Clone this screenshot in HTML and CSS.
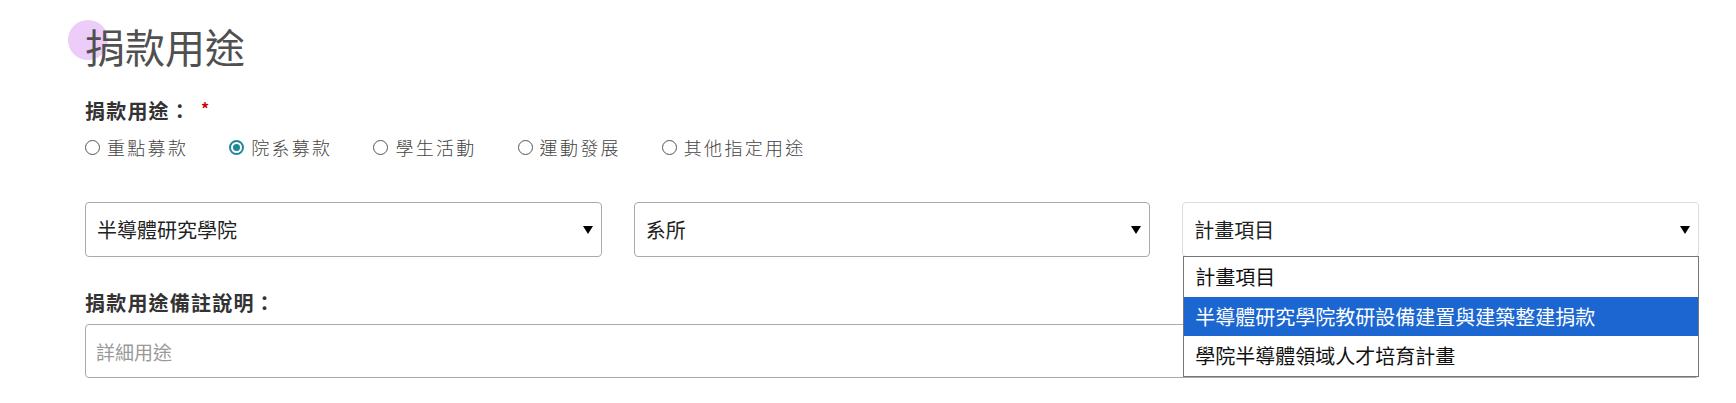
FILE: index.html
```html
<!DOCTYPE html>
<html lang="zh-Hant">
<head>
<meta charset="utf-8">
<title>捐款用途</title>
<link rel="stylesheet" href="styles.css">
</head>
<body>
<div class="page">
  <h2 class="title"><span class="title-dot"></span><span class="title-text">捐款用途</span></h2>

  <div class="field-label">捐款用途：<span class="req">*</span></div>

  <div class="radios">
    <label class="radio"><span class="radio-mark"></span><span class="radio-text">重點募款</span></label>
    <label class="radio"><span class="radio-mark checked"></span><span class="radio-text">院系募款</span></label>
    <label class="radio"><span class="radio-mark"></span><span class="radio-text">學生活動</span></label>
    <label class="radio"><span class="radio-mark"></span><span class="radio-text">運動發展</span></label>
    <label class="radio"><span class="radio-mark"></span><span class="radio-text">其他指定用途</span></label>
  </div>

  <div class="selects">
    <div class="select">
      <span class="select-value">半導體研究學院</span>
      <svg class="caret" width="10" height="8" viewBox="0 0 10 8"><polygon points="0,0 10,0 5,8" fill="#000"/></svg>
    </div>
    <div class="select">
      <span class="select-value">系所</span>
      <svg class="caret" width="10" height="8" viewBox="0 0 10 8"><polygon points="0,0 10,0 5,8" fill="#000"/></svg>
    </div>
    <div class="select select-open">
      <span class="select-value">計畫項目</span>
      <svg class="caret" width="10" height="8" viewBox="0 0 10 8"><polygon points="0,0 10,0 5,8" fill="#000"/></svg>
      <ul class="options">
        <li class="option">計畫項目</li>
        <li class="option option-active">半導體研究學院教研設備建置與建築整建捐款</li>
        <li class="option">學院半導體領域人才培育計畫</li>
      </ul>
    </div>
  </div>

  <div class="field-label note-label">捐款用途備註說明：</div>
  <div class="text-input"><span class="placeholder">詳細用途</span></div>
</div>
</body>
</html>
```

FILE: styles.css
```css
* { box-sizing: border-box; }

html, body {
  margin: 0;
  padding: 0;
  background: #fff;
}

body {
  font-family: "Noto Sans CJK TC", "Noto Sans", sans-serif;
  color: #333;
}

.page {
  width: 1614px;
  margin-left: 85px;
  padding-top: 22px;
}

.title {
  position: relative;
  margin: 0;
  font-size: 40px;
  line-height: 48px;
  font-weight: 400;
  color: #505050;
}

.title-dot {
  position: absolute;
  left: -17px;
  top: -2px;
  width: 40px;
  height: 40px;
  border-radius: 50%;
  background: #ecccf8;
}

.title-text {
  position: relative;
}

.field-label {
  margin-top: 29px;
  font-size: 20px;
  line-height: 24px;
  font-weight: 700;
  letter-spacing: 1.2px;
  color: #333;
}

.req {
  display: inline-block;
  margin-left: 10px;
  font-size: 16px;
  color: #c00;
  vertical-align: 4px;
  line-height: 1;
}

.radios {
  display: flex;
  margin-top: 12px;
  height: 24px;
  align-items: center;
}

.radio {
  display: flex;
  align-items: center;
  margin-right: 41px;
  font-size: 18px;
  line-height: 24px;
  font-weight: 300;
  color: #444;
}

.radio-mark {
  width: 15px;
  height: 15px;
  border: 1px solid #555;
  border-radius: 50%;
  margin-right: 7px;
  flex: none;
}

.radio-mark.checked {
  border: 2px solid #1f8597;
  position: relative;
}

.radio-mark.checked::after {
  content: "";
  position: absolute;
  left: 2px;
  top: 2px;
  width: 7px;
  height: 7px;
  border-radius: 50%;
  background: #1f8597;
}

.radio-text {
  letter-spacing: 2.3px;
}

.selects {
  display: grid;
  grid-template-columns: 1fr 1fr 1fr;
  column-gap: 32px;
  margin-top: 43px;
}

.select {
  position: relative;
  display: flex;
  align-items: center;
  justify-content: space-between;
  height: 55px;
  padding: 0 8px 0 11px;
  border: 1px solid #aaa;
  border-radius: 4px;
  font-size: 20px;
  color: #222;
}

.select-open {
  border-color: #ddd;
}

.caret {
  display: block;
  flex: none;
}

.options {
  position: absolute;
  left: 0;
  right: -1px;
  top: 53px;
  margin: 0;
  padding: 0;
  list-style: none;
  background: #fff;
  border: 1px solid #767676;
  z-index: 5;
}

.option {
  height: 40px;
  line-height: 40px;
  padding-left: 11px;
  font-size: 20px;
  color: #111;
  white-space: nowrap;
}

.option-active {
  height: 39px;
  line-height: 39px;
  background: #1b66d1;
  color: #fff;
}

.note-label {
  margin-top: 34px;
}

.text-input {
  display: flex;
  align-items: center;
  height: 54px;
  margin-top: 9px;
  padding-left: 10px;
  border: 1px solid #aaa;
  border-radius: 4px;
}

.placeholder {
  font-size: 19px;
  color: #999;
}
```
